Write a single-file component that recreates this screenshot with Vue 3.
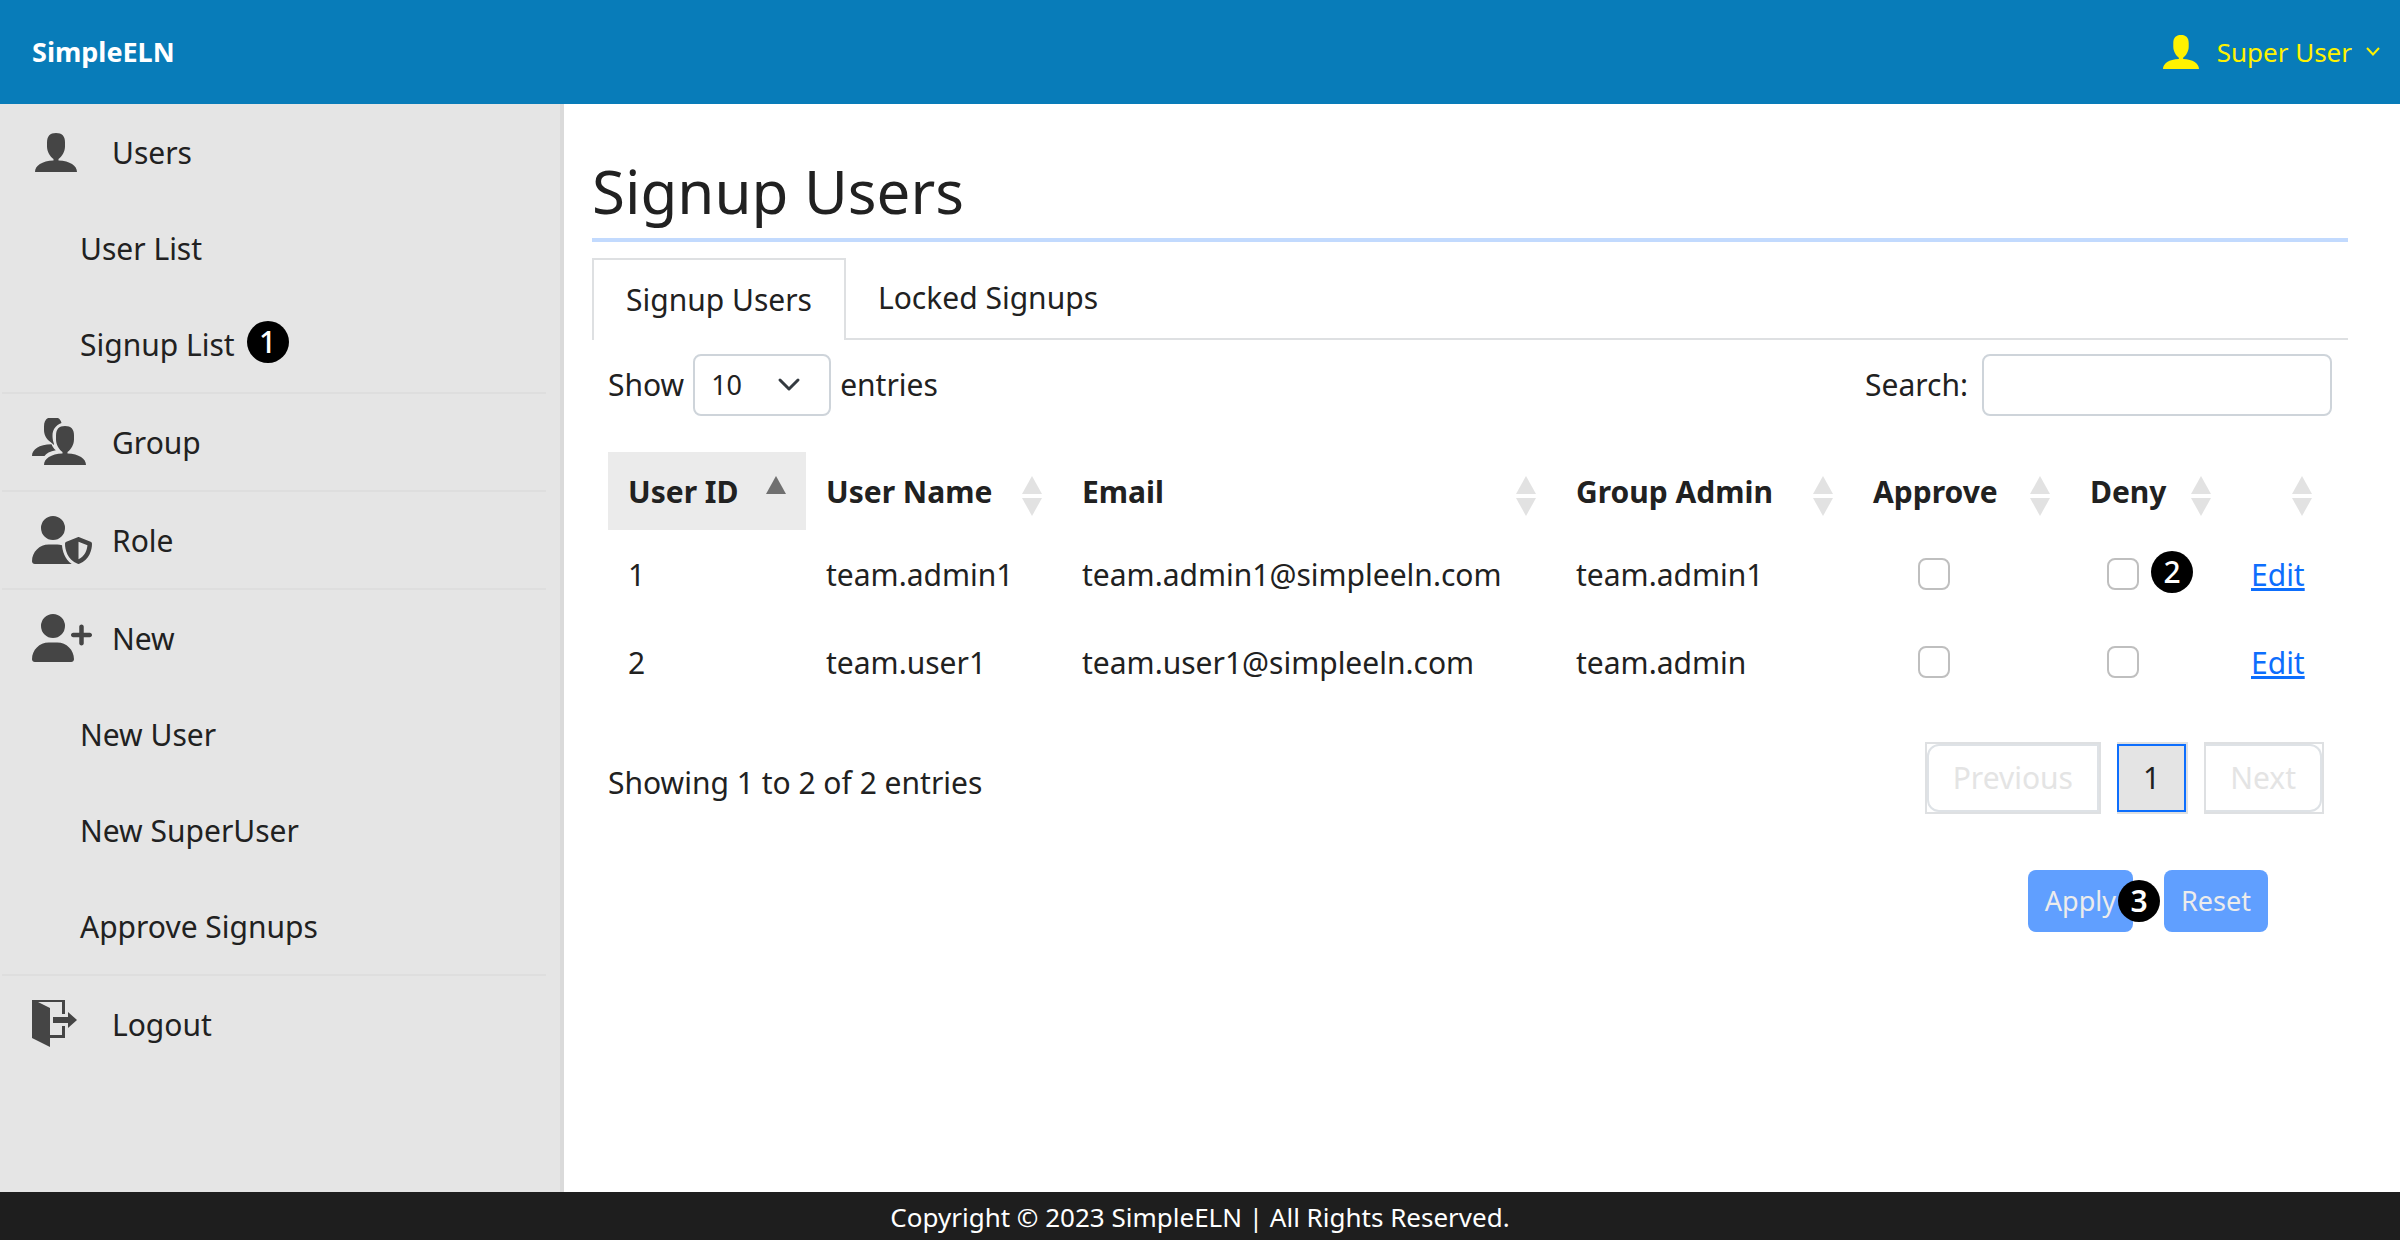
<script setup>
import { ref } from 'vue'

const shapes = {
  user: {
    box: '-3 -5 60 48',
    d: 'M21 0c6 0 9 3 9 9.500v4c0 5-3 10-6.500 12.500v1.500C35 28 42 32.500 42 39H0c0-6.500 7-11 18.500-11.500V26C15 23.500 12 18.500 12 13.500v-4C12 3 15 0 21 0z'
  },
  role: {
    box: '0 0 640 512',
    d: 'M224 256A128 128 0 1 0 224 0a128 128 0 1 0 0 256zm-45.7 48C79.8 304 0 383.8 0 482.3C0 498.7 13.3 512 29.7 512H418.3c1.8 0 3.5-.2 5.3-.5c-76.3-55.1-99.8-141-103.1-200.2c-16.1-4.8-33.1-7.3-50.7-7.3H178.3zm308.8-78.3l-120 48C358 277.4 352 286.2 352 296c0 63.3 25.9 168.8 134.8 214.2c5.9 2.5 12.6 2.5 18.5 0C614.1 464.8 640 359.3 640 296c0-9.8-6-18.6-15.1-22.3l-120-48c-5.7-2.3-12.1-2.3-17.8 0zM591.4 312c-3.9 50.7-27.2 116.7-95.4 149.7V273.8L591.4 312z'
  },
  plus: {
    box: '0 0 640 512',
    d: 'M96 128a128 128 0 1 1 256 0A128 128 0 1 1 96 128zM0 482.3C0 383.8 79.8 304 178.3 304h91.4C368.2 304 448 383.8 448 482.3c0 16.4-13.3 29.7-29.7 29.7H29.7C13.3 512 0 498.7 0 482.3zM504 312V248H440c-13.3 0-24-10.7-24-24s10.7-24 24-24h64V136c0-13.3 10.7-24 24-24s24 10.7 24 24v64h64c13.3 0 24 10.7 24 24s-10.7 24-24 24H552v64c0 13.3-10.7 24-24 24s-24-10.7-24-24z'
  },
  group: {
    box: '0 1 60 48',
    d: 'M21 0c5 0 7.500 2 8.500 6C23 8.500 20.500 13 20.500 19c0 3 .5 5 1.500 8v1l-3.500-3C14 22 12 17.500 12 13v-3.500C12 3 15 0 21 0zM0 39c0-6.500 7-11.500 19.500-11.700 1 2.500 2.200 4.200 4.300 6C18 34.500 14 36.500 12.500 39zM33 9c6 0 9 3 9 9.500v4c0 5-3 10-6.500 12.500v1.500C47 37 54 41.500 54 48H12c0-6.500 7-11 18.500-11.500V35C27 32.500 24 27.500 24 22.500v-4C24 12 27 9 33 9z'
  },
  logout: {
    box: '0 1 60 48',
    d: 'M0 0h33v15h-3V3H6l12 6v27h12V27h3v12H18v9L0 39zM21 18h15v-5l9 8-9 8v-5H21z'
  }
}

const menu = [
  {
    label: 'Users',
    icon: 'user',
    items: [{ label: 'User List' }, { label: 'Signup List', step: 1 }]
  },
  { label: 'Group', icon: 'group', items: [] },
  { label: 'Role', icon: 'role', items: [] },
  {
    label: 'New',
    icon: 'plus',
    items: [{ label: 'New User' }, { label: 'New SuperUser' }, { label: 'Approve Signups' }]
  },
  { label: 'Logout', icon: 'logout', items: [] }
]

const columns = [
  { label: 'User ID', cls: 'c-id' },
  { label: 'User Name', cls: 'c-name' },
  { label: 'Email', cls: 'c-email' },
  { label: 'Group Admin', cls: 'c-group' },
  { label: 'Approve', cls: 'c-approve' },
  { label: 'Deny', cls: 'c-deny' },
  { label: '', cls: 'c-edit' }
]

const rows = ref([
  { id: 1, name: 'team.admin1', email: 'team.admin1@simpleeln.com', group: 'team.admin1', approve: false, deny: false, step: 2 },
  { id: 2, name: 'team.user1', email: 'team.user1@simpleeln.com', group: 'team.admin', approve: false, deny: false }
])

const pageSize = ref('10')
const search = ref('')
</script>

<template>
  <div class="page">
    <header class="topbar">
      <a class="brand" href="#">SimpleELN</a>
      <button class="account" type="button">
        <svg class="avatar" viewBox="0 0 42 39" preserveAspectRatio="none" aria-hidden="true"><path :d="shapes.user.d" /></svg>
        <span>Super User</span>
        <svg class="caret" viewBox="0 0 14 10" aria-hidden="true"><path d="M1 1l6 6.500L13 1" /></svg>
      </button>
    </header>

    <div class="body">
      <nav class="sidebar">
        <ul v-for="section in menu" :key="section.label" class="section">
          <li>
            <a class="entry" href="#">
              <svg class="icon" :viewBox="shapes[section.icon].box" aria-hidden="true"><path :d="shapes[section.icon].d" /></svg>
              <span class="label">{{ section.label }}</span>
            </a>
          </li>
          <li v-for="item in section.items" :key="item.label">
            <a class="entry sub" href="#">
              <span class="label">{{ item.label }}</span>
              <span v-if="item.step" class="step after">{{ item.step }}</span>
            </a>
          </li>
        </ul>
      </nav>

      <main class="content">
        <h1>Signup Users</h1>
        <div class="tabs" role="tablist">
          <button class="tab active" type="button" role="tab" aria-selected="true">Signup Users</button>
          <button class="tab" type="button" role="tab" aria-selected="false">Locked Signups</button>
        </div>

        <div class="panel">
          <div class="tools">
            <div class="field">
              <label for="size">Show</label>
              <div class="select">
                <select id="size" v-model="pageSize">
                  <option>10</option>
                  <option>25</option>
                  <option>50</option>
                </select>
                <svg viewBox="0 0 24 16" aria-hidden="true"><path d="M3 3l9 9 9-9" /></svg>
              </div>
              <span>entries</span>
            </div>
            <div class="field search">
              <label for="search">Search:</label>
              <input id="search" v-model="search" type="search" />
            </div>
          </div>

          <table>
            <thead>
              <tr>
                <th v-for="(col, i) in columns" :key="col.cls" :class="[col.cls, { sorted: i === 0 }]" scope="col">
                  <div class="head">
                    <span class="label">{{ col.label }}</span>
                    <svg class="sort" viewBox="0 0 20 40" aria-hidden="true">
                      <path d="M10 0l10 18H0z" />
                      <path v-if="i > 0" d="M10 40L0 22h20z" />
                    </svg>
                  </div>
                </th>
              </tr>
            </thead>
            <tbody>
              <tr v-for="row in rows" :key="row.id">
                <td>{{ row.id }}</td>
                <td>{{ row.name }}</td>
                <td>{{ row.email }}</td>
                <td>{{ row.group }}</td>
                <td class="check">
                  <div class="anchor">
                    <input v-model="row.approve" type="checkbox" :aria-label="'Approve ' + row.name" />
                  </div>
                </td>
                <td class="check">
                  <div class="anchor">
                    <input v-model="row.deny" type="checkbox" :aria-label="'Deny ' + row.name" />
                    <span v-if="row.step" class="step beside">{{ row.step }}</span>
                  </div>
                </td>
                <td><a class="link" href="#">Edit</a></td>
              </tr>
            </tbody>
          </table>

          <div class="status">
            <p>Showing 1 to 2 of 2 entries</p>
            <div class="pager">
              <span class="slot"><button class="page-btn prev" type="button" disabled>Previous</button></span>
              <span class="slot current"><button class="page-btn" type="button">1</button></span>
              <span class="slot last"><button class="page-btn next" type="button" disabled>Next</button></span>
            </div>
          </div>

          <div class="actions">
            <div class="anchor">
              <button class="btn" type="button">Apply</button>
              <span class="step over">3</span>
            </div>
            <button class="btn" type="button">Reset</button>
          </div>
        </div>
      </main>
    </div>

    <footer class="footer">Copyright © 2023 SimpleELN | All Rights Reserved.</footer>
  </div>
</template>

<style>
body {
  margin: 0;
}
</style>

<style scoped>
.page {
  display: flex;
  flex-direction: column;
  min-height: 100vh;
  font-family: 'Noto Sans', 'Open Sans', sans-serif;
  font-size: 30px;
  line-height: 48px;
  color: #212121;
  background: #fff;
}
.page * {
  box-sizing: border-box;
}
button,
input,
select {
  font: inherit;
  color: inherit;
  margin: 0;
}
a {
  color: inherit;
  text-decoration: none;
}
.topbar {
  display: flex;
  align-items: center;
  justify-content: space-between;
  height: 104px;
  padding: 0 20px 0 32px;
  background: #087cb9;
  color: #fff;
}
.brand {
  font-size: 27px;
  font-weight: 700;
}
.account {
  display: flex;
  align-items: center;
  padding: 0;
  border: 0;
  background: none;
  color: #fff200;
  font-size: 26px;
}
.avatar {
  width: 36px;
  height: 34px;
  margin-right: 18px;
  fill: currentColor;
}
.caret {
  width: 14px;
  height: 10px;
  margin-left: 14px;
  fill: none;
  stroke: currentColor;
  stroke-width: 2;
}
.body {
  display: flex;
  flex: 1;
}
.sidebar {
  flex: none;
  width: 564px;
  padding: 0 14px 0 2px;
  border-right: 4px solid #dadada;
  background: #e5e5e5;
}
.section {
  margin: 0;
  padding: 0;
  list-style: none;
}
.section + .section {
  border-top: 2px solid #dedede;
}
.entry {
  display: flex;
  align-items: center;
  gap: 20px;
  height: 96px;
  padding-left: 30px;
}
.sub {
  gap: 12px;
  padding-left: 78px;
}
.label {
  padding-top: 2px;
}
.icon {
  width: 60px;
  height: 48px;
  fill: #454545;
}
.step {
  display: inline-flex;
  flex: none;
  align-items: center;
  justify-content: center;
  width: 42px;
  height: 42px;
  border-radius: 50%;
  background: #000;
  color: #fff;
  font-size: 30px;
  font-weight: 500;
  line-height: 42px;
}
.after {
  margin-bottom: 4px;
}
.anchor {
  position: relative;
}
.beside {
  position: absolute;
  left: 44px;
  top: -7px;
}
.over {
  position: absolute;
  right: -27px;
  top: 10px;
  font-weight: 600;
}
.content {
  flex: 1;
  min-width: 0;
  padding: 47px 52px 48px 28px;
}
h1 {
  margin: 0 0 16px;
  padding-bottom: 7px;
  border-bottom: 4px solid #c2dafe;
  font-size: 60px;
  font-weight: 400;
  line-height: 80px;
}
.tabs {
  display: flex;
  height: 82px;
  border-bottom: 2px solid #dee0e2;
}
.tab {
  height: 80px;
  padding: 0 32px;
  border: 0;
  background: #fff;
}
.tab.active {
  height: 82px;
  border: 2px solid #dee0e2;
  border-bottom: 0;
}
.panel {
  padding: 14px 16px 0;
}
.tools {
  display: flex;
  justify-content: space-between;
}
.field {
  display: flex;
  align-items: center;
  gap: 9px;
}
.search {
  gap: 14px;
}
.select {
  display: grid;
  align-items: center;
  width: 138px;
}
.select select {
  grid-area: 1 / 1;
  height: 62px;
  padding: 0 16px;
  border: 2px solid #ced4da;
  border-radius: 8px;
  background: #fff;
  font-size: 27px;
  appearance: none;
}
.select svg {
  grid-area: 1 / 1;
  justify-self: end;
  width: 24px;
  height: 16px;
  margin-right: 30px;
  fill: none;
  stroke: #343a40;
  stroke-width: 3;
  stroke-linecap: round;
  stroke-linejoin: round;
  pointer-events: none;
}
.search input {
  width: 350px;
  height: 62px;
  padding: 0 16px;
  border: 2px solid #ced4da;
  border-radius: 8px;
  background: #fff;
  appearance: none;
}
table {
  width: 100%;
  margin-top: 36px;
  border-collapse: collapse;
  table-layout: fixed;
}
th {
  height: 78px;
  padding: 0 20px;
  text-align: left;
}
.head {
  display: flex;
  align-items: center;
  justify-content: space-between;
  white-space: nowrap;
}
.sort {
  flex: none;
  width: 20px;
  height: 40px;
  margin: 9px 0 0 auto;
  fill: #e2e2e2;
}
.sorted {
  background: #ebebeb;
}
.sorted .sort {
  fill: #707070;
}
.c-id {
  width: 198px;
}
.c-name {
  width: 256px;
}
.c-group {
  width: 297px;
}
.c-approve {
  width: 217px;
}
.c-deny {
  width: 161px;
}
.c-edit {
  width: 101px;
}
td {
  height: 88px;
  padding: 2px 20px 0;
}
.check {
  padding: 0 75px 0 20px;
}
.check .anchor {
  width: 32px;
  margin: 0 auto;
}
.check input {
  display: block;
  width: 32px;
  height: 32px;
  border: 2px solid #bfbfbf;
  border-radius: 8px;
  background: #fff;
  appearance: none;
}
.link {
  color: #0d6efd;
  text-decoration: underline;
}
.status {
  display: flex;
  align-items: center;
  justify-content: space-between;
  margin-top: 36px;
  padding-right: 8px;
}
.status p {
  margin: 10px 0 0;
}
.pager {
  display: flex;
  gap: 16px;
}
.slot {
  display: flex;
  height: 72px;
  border: 2px solid #dee0e2;
}
.page-btn {
  padding: 0 24px;
  border: 2px solid #dee2e6;
  background: #fff;
  color: #e4e4e4;
}
.prev {
  border-radius: 12px 0 0 12px;
}
.next {
  border-left: 0;
  border-radius: 0 12px 12px 0;
}
.current {
  border-left: 0;
  background: #dee0e2;
}
.current .page-btn {
  border-color: #0d6efd;
  background: #e4e4e4;
  color: #212121;
}
.actions {
  display: flex;
  justify-content: flex-end;
  gap: 31px;
  margin-top: 56px;
  padding-right: 64px;
}
.btn {
  height: 62px;
  padding: 0 17px;
  border: 0;
  border-radius: 8px;
  background: #609fff;
  color: #ececec;
  font-size: 27px;
}
.footer {
  height: 48px;
  padding-top: 1px;
  background: #1e1e1e;
  color: #fff;
  font-size: 26px;
  text-align: center;
}
</style>
